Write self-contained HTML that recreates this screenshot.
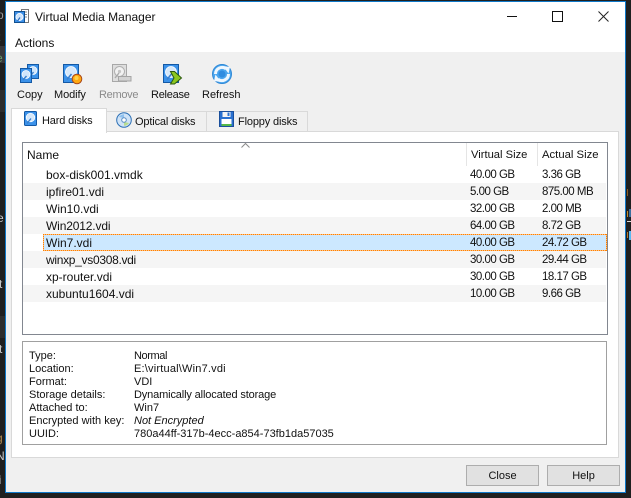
<!DOCTYPE html>
<html><head><meta charset="utf-8"><style>
html,body{margin:0;padding:0;width:631px;height:498px;overflow:hidden;background:#1f1f1f}
body{position:relative;font-family:"Liberation Sans",sans-serif;font-size:12px;color:#111}
.a{position:absolute;white-space:nowrap;line-height:14px}
.d{font-size:11px;margin-top:1px}
.b{position:absolute}
svg{position:absolute;overflow:visible}
.row{position:absolute;left:23px;width:583px;height:17px}
.alt{background:#f5f5f5}
.n,.v,.s{position:absolute;top:2px;line-height:15px;white-space:nowrap}
.n{left:23px}.v{left:447px}.s{left:519px}
.v,.s{font-size:11.5px;letter-spacing:-.5px}
.btn{position:absolute;top:465px;width:71px;height:19px;border:1px solid #adadad;background:#e1e1e1;text-align:center;line-height:21px;font-size:11px}
.lbl{position:absolute;top:88px;line-height:14px;white-space:nowrap;font-size:11px}
.tab{font-size:11px;letter-spacing:-.15px}
.h{position:absolute;height:1px;background:linear-gradient(90deg,#ff8000 1px,#ffc080 1px) 0 0/2px 1px repeat-x}
.w{position:absolute;width:1px;background:linear-gradient(180deg,#ff8000 1px,#ffc080 1px) 0 0/1px 2px repeat-y}
</style></head><body>
<!-- background fragments -->
<div class="b" style="left:0;top:46px;width:5px;height:17px;background:#37373a"></div>
<div class="b" style="left:0;top:90px;width:5px;height:22px;background:#2d2d2d"></div>
<div class="b" style="left:0;top:316px;width:5px;height:22px;background:#2d2d2d"></div>
<div class="a" style="left:-3px;top:8px;color:#9a9a9a;width:8px;overflow:hidden">p</div>
<div class="a" style="left:-3px;top:30px;color:#6a9a6a;width:8px;overflow:hidden">t</div>
<div class="a" style="left:-4px;top:51px;color:#6a9a6a;width:9px;overflow:hidden">e</div>
<div class="a" style="left:-3px;top:211px;color:#c8c8c8;width:8px;overflow:hidden">e</div>
<div class="a" style="left:-1px;top:277px;color:#c8c8c8;width:6px;overflow:hidden">t</div>
<div class="a" style="left:-1px;top:342px;color:#c8c8c8;width:6px;overflow:hidden">t</div>
<div class="a" style="left:-4px;top:431px;color:#b08a50;width:9px;overflow:hidden">g</div>
<div class="a" style="left:-4px;top:449px;color:#c8c8c8;width:9px;overflow:hidden">N</div>
<div class="a" style="left:-4px;top:473px;color:#c8c8c8;width:9px;overflow:hidden">li</div>
<div class="b" style="left:627px;top:189px;width:1px;height:7px;background:#8a5a20"></div>
<div class="b" style="left:627px;top:211px;width:1px;height:6px;background:#c08a2a"></div>
<div class="b" style="left:629px;top:209px;width:2px;height:8px;background:#3b6f9e"></div>
<div class="b" style="left:627px;top:221px;width:4px;height:1px;background:#dcdcdc"></div>
<div class="b" style="left:627px;top:232px;width:1px;height:6px;background:#b5762a"></div>
<div class="b" style="left:629px;top:231px;width:2px;height:9px;background:#5cb8f0"></div>

<!-- window -->
<div class="b" style="left:5px;top:1px;width:619px;height:490px;border:1px solid #0f78c8;background:#f0f0f0"></div>
<div class="b" style="left:6px;top:2px;width:619px;height:50px;background:#fff"></div>

<!-- title icon -->
<svg style="left:14px;top:8px" width="16" height="16" viewBox="0 0 16 16">
<rect x="7.500" y="1.500" width="7" height="13" fill="#fff" stroke="#777"/>
<path d="M9 4h4M9 6.500h4M9 9h4" stroke="#888"/>
<rect x=".5" y="3.500" width="10" height="11" fill="#3b8ee6" stroke="#12508f"/>
<circle cx="5.500" cy="9" r="3.600" fill="#cfe4fb" stroke="#fff" stroke-width=".7"/>
<path d="M3.500 13 6 9.500" stroke="#2a6fc0" stroke-width="1.200"/>
</svg>
<div class="a" style="left:35px;top:10px">Virtual Media Manager</div>
<div class="a" style="left:15px;top:36px">Actions</div>

<!-- window buttons -->
<div class="b" style="left:507px;top:16px;width:10px;height:1px;background:#111"></div>
<div class="b" style="left:552px;top:11px;width:9px;height:9px;border:1px solid #111"></div>
<svg style="left:598px;top:11px" width="11" height="11" viewBox="0 0 11 11"><path d="M.5.5 10.500 10.500M10.500.5.5 10.500" stroke="#222" stroke-width="1"/></svg>

<!-- toolbar icons -->
<svg style="left:20px;top:64px" width="20" height="20" viewBox="0 0 20 20">
<rect x="7.500" y=".5" width="11" height="14" fill="#3b92ea" stroke="#1459a5"/>
<circle cx="13" cy="6.500" r="4" fill="#cfe5fb" stroke="#fff" stroke-width=".7"/>
<path d="M10.500 12 13.500 8" stroke="#3b7fcc" stroke-width="1.300"/>
<rect x=".5" y="4.500" width="11" height="14" fill="#3b92ea" stroke="#1459a5"/>
<circle cx="6" cy="10.500" r="4" fill="#cfe5fb" stroke="#fff" stroke-width=".7"/>
<path d="M3 16 6.500 12" stroke="#3b7fcc" stroke-width="1.400"/>
</svg>
<div class="lbl" style="left:17px">Copy</div>

<svg style="left:63px;top:64px" width="20" height="21" viewBox="0 0 20 21">
<rect x=".5" y=".5" width="15" height="18" fill="#3b92ea" stroke="#1459a5"/>
<circle cx="8" cy="8" r="5.500" fill="#d5e8fb" stroke="#fff" stroke-width=".8"/>
<path d="M4 15.500 8.500 10" stroke="#3b7fcc" stroke-width="1.600"/>
<circle cx="14" cy="15" r="4.800" fill="#ffa810" stroke="#a8481a"/>
<circle cx="13.500" cy="14" r="2" fill="#ffd34a"/>
</svg>
<div class="lbl" style="left:54px;letter-spacing:-.1px">Modify</div>

<svg style="left:112px;top:64px" width="20" height="20" viewBox="0 0 20 20">
<rect x=".5" y=".5" width="14" height="17" fill="#dedede" stroke="#a8a8a8"/>
<circle cx="7.500" cy="7.500" r="5" fill="#f2f2f2" stroke="#b0b0b0"/>
<circle cx="7.500" cy="7.500" r="1.600" fill="#c5c5c5"/>
<path d="M3 14 7 9" stroke="#aaa" stroke-width="1.400"/>
<rect x="6.500" y="12.500" width="12.500" height="4.500" fill="#d3d3d3" stroke="#a5a5a5"/>
</svg>
<div class="lbl" style="left:99px;color:#8a8a8a;letter-spacing:-.3px">Remove</div>

<svg style="left:163px;top:64px" width="20" height="21" viewBox="0 0 20 21">
<rect x=".5" y=".5" width="15" height="18" fill="#3b92ea" stroke="#1459a5"/>
<circle cx="8" cy="8" r="5.500" fill="#d5e8fb" stroke="#fff" stroke-width=".8"/>
<path d="M4 15.500 8.500 10" stroke="#3b7fcc" stroke-width="1.600"/>
<path d="M7.500 7.500h4l7 6.500-7 6h-4l3.500-6z" fill="#8cc820" stroke="#2d5a12" stroke-width="1"/>
</svg>
<div class="lbl" style="left:151px;letter-spacing:-.25px">Release</div>

<svg style="left:212px;top:64px" width="20" height="20" viewBox="0 0 20 20">
<circle cx="10" cy="10" r="9.500" fill="#4ba6ee" stroke="#2f88d6"/>
<path d="M3.500 10A6.500 6.500 0 0 1 14 4.800" fill="none" stroke="#eef7ff" stroke-width="3"/>
<path d="M16.500 10A6.500 6.500 0 0 1 6 15.200" fill="none" stroke="#eef7ff" stroke-width="3"/>
<path d="M11 2 18 3 16.500 9.500z" fill="#eef7ff"/>
<path d="M9 18 2 17 3.500 10.500z" fill="#eef7ff"/>
<path d="M6.500 10A3.500 3.500 0 0 1 13.500 10 3.500 3.500 0 0 1 6.500 10z" fill="#2f8ce0"/>
</svg>
<div class="lbl" style="left:202px">Refresh</div>

<!-- tab pane -->
<div class="b" style="left:11px;top:131px;width:606px;height:325px;background:#fff;border:1px solid #d9d9d9"></div>
<!-- inactive tabs -->
<div class="b" style="left:106px;top:111px;width:100px;height:19px;background:#f0f0f0;border:1px solid #d9d9d9"></div>
<div class="b" style="left:206px;top:111px;width:100px;height:19px;background:#f0f0f0;border:1px solid #d9d9d9"></div>
<!-- active tab -->
<div class="b" style="left:11px;top:108px;width:94px;height:24px;background:#fff;border:1px solid #d9d9d9;border-bottom:0"></div>

<svg style="left:24px;top:111px" width="14" height="15" viewBox="0 0 14 15">
<rect x=".5" y=".5" width="12" height="14" rx="1" fill="#3b92ea" stroke="#1459a5"/>
<circle cx="6.500" cy="6.500" r="4.300" fill="#d5e8fb" stroke="#fff" stroke-width=".7"/>
<path d="M3 12.500 7 7.500" stroke="#3b7fcc" stroke-width="1.400"/>
</svg>
<div class="a tab" style="left:42px;top:114px">Hard disks</div>

<svg style="left:116px;top:112px" width="16" height="16" viewBox="0 0 16 16">
<circle cx="8" cy="8" r="7.300" fill="#cfe3f7" stroke="#2b6fb5"/>
<path d="M3 5A6 6 0 0 1 8 2.200V6z" fill="#8ec0ee"/>
<path d="M13 11A6 6 0 0 1 8 13.800V10z" fill="#b8dc8e"/>
<circle cx="8" cy="8" r="2.300" fill="#fff" stroke="#5a8fc5"/>
</svg>
<div class="a tab" style="left:135px;top:115px">Optical disks</div>

<svg style="left:219px;top:111px" width="15" height="16" viewBox="0 0 15 16">
<rect x=".5" y=".5" width="14" height="15" fill="#2a70d0" stroke="#1a4f9c"/>
<rect x="3.500" y="1" width="8" height="5" fill="#f4f4f4"/>
<rect x="8.500" y="1.500" width="2" height="3.500" fill="#2a70d0"/>
<rect x="2.500" y="8" width="10" height="7" fill="#fff"/>
<rect x="2.500" y="13" width="10" height="2" fill="#55b848"/>
</svg>
<div class="a tab" style="left:238px;top:115px">Floppy disks</div>

<!-- tree -->
<div class="b" style="left:22px;top:142px;width:584px;height:191px;border:1px solid #828790;background:#fff"></div>
<svg style="left:241px;top:143px" width="9" height="5" viewBox="0 0 9 5"><path d="M.5 4.500 4.500.5l4 4" fill="none" stroke="#8a8a8a"/></svg>
<div class="b" style="left:466px;top:143px;width:1px;height:23px;background:#e5e5e5"></div>
<div class="b" style="left:537px;top:143px;width:1px;height:23px;background:#e5e5e5"></div>
<div class="a" style="left:27px;top:148px">Name</div>
<div class="a" style="left:471px;top:148px;font-size:11.2px">Virtual Size</div>
<div class="a" style="left:542px;top:148px;font-size:11.3px">Actual Size</div>

<div class="row" style="top:166px"><span class="n">box-disk001.vmdk</span><span class="v">40.00 GB</span><span class="s">3.36 GB</span></div>
<div class="row alt" style="top:183px"><span class="n">ipfire01.vdi</span><span class="v">5.00 GB</span><span class="s">875.00 MB</span></div>
<div class="row" style="top:200px"><span class="n">Win10.vdi</span><span class="v">32.00 GB</span><span class="s">2.00 MB</span></div>
<div class="row alt" style="top:217px"><span class="n" style="letter-spacing:-.15px">Win2012.vdi</span><span class="v">64.00 GB</span><span class="s">8.72 GB</span></div>
<div class="b" style="left:43px;top:234px;width:564px;height:17px;background:#cce8ff"></div>
<div class="row" style="top:234px"><span class="n">Win7.vdi</span><span class="v">40.00 GB</span><span class="s">24.72 GB</span></div>
<div class="h" style="left:43px;top:234px;width:564px"></div>
<div class="h" style="left:43px;top:250px;width:564px"></div>
<div class="w" style="left:43px;top:234px;height:17px"></div>
<div class="w" style="left:606px;top:234px;height:17px"></div>
<div class="row alt" style="top:251px"><span class="n" style="letter-spacing:-.3px">winxp_vs0308.vdi</span><span class="v">30.00 GB</span><span class="s">29.44 GB</span></div>
<div class="row" style="top:268px"><span class="n">xp-router.vdi</span><span class="v">30.00 GB</span><span class="s">18.17 GB</span></div>
<div class="row alt" style="top:285px"><span class="n">xubuntu1604.vdi</span><span class="v">10.00 GB</span><span class="s">9.66 GB</span></div>

<!-- details -->
<div class="b" style="left:22px;top:341px;width:583px;height:102px;border:1px solid #a0a0a0;background:#fff"></div>
<div class="a d" style="left:29px;top:348px">Type:</div><div class="a d" style="left:134px;top:348px;letter-spacing:-.4px">Normal</div>
<div class="a d" style="left:29px;top:361px">Location:</div><div class="a d" style="left:134px;top:361px;letter-spacing:.2px">E:\virtual\Win7.vdi</div>
<div class="a d" style="left:29px;top:374px">Format:</div><div class="a d" style="left:134px;top:374px">VDI</div>
<div class="a d" style="left:29px;top:387px">Storage details:</div><div class="a d" style="left:134px;top:387px;letter-spacing:-.14px">Dynamically allocated storage</div>
<div class="a d" style="left:29px;top:400px">Attached to:</div><div class="a d" style="left:134px;top:400px">Win7</div>
<div class="a d" style="left:29px;top:413px">Encrypted with key:</div><div class="a d" style="left:134px;top:413px;font-style:italic">Not Encrypted</div>
<div class="a d" style="left:29px;top:426px">UUID:</div><div class="a d" style="left:134px;top:426px">780a44ff-317b-4ecc-a854-73fb1da57035</div>

<!-- buttons -->
<div class="btn" style="left:466px">Close</div>
<div class="btn" style="left:547px">Help</div>
</body></html>
